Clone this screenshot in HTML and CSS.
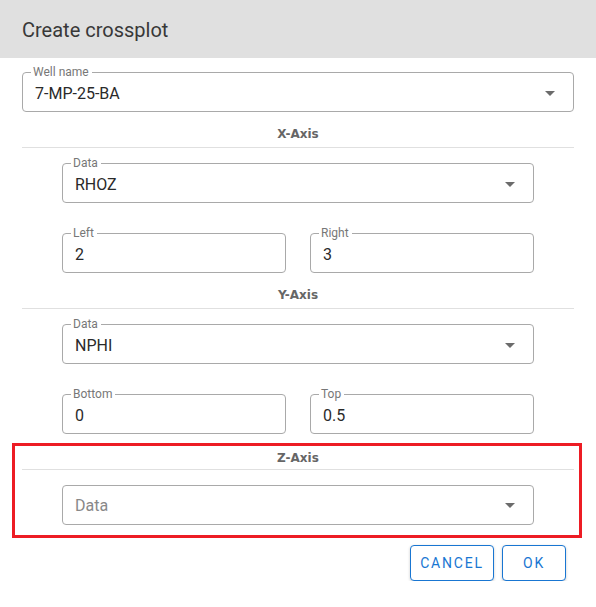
FILE: index.html
```html
<!DOCTYPE html>
<html>
<head>
<meta charset="utf-8">
<link rel="stylesheet" href="styles.css">
</head>
<body>
<div class="dialog">
  <div class="dialog-title">Create crossplot</div>
  <div class="dialog-content">
    <div class="field select">
      <span class="label">Well name</span>
      <span class="value">7-MP-25-BA</span>
      <svg class="arrow" viewBox="0 0 24 24" width="24" height="24"><path d="M7 10l5 5 5-5z"/></svg>
    </div>

    <div class="section-title">X-Axis</div>
    <div class="group">
      <div class="field select">
        <span class="label">Data</span>
        <span class="value">RHOZ</span>
        <svg class="arrow" viewBox="0 0 24 24" width="24" height="24"><path d="M7 10l5 5 5-5z"/></svg>
      </div>
      <div class="pair">
        <div class="field"><span class="label">Left</span><span class="value">2</span></div>
        <div class="field"><span class="label">Right</span><span class="value">3</span></div>
      </div>
    </div>

    <div class="section-title">Y-Axis</div>
    <div class="group">
      <div class="field select">
        <span class="label">Data</span>
        <span class="value">NPHI</span>
        <svg class="arrow" viewBox="0 0 24 24" width="24" height="24"><path d="M7 10l5 5 5-5z"/></svg>
      </div>
      <div class="pair">
        <div class="field"><span class="label">Bottom</span><span class="value">0</span></div>
        <div class="field"><span class="label">Top</span><span class="value">0.5</span></div>
      </div>
    </div>

    <div class="highlight">
      <div class="section-title z">Z-Axis</div>
      <div class="group">
        <div class="field select empty">
          <span class="value placeholder">Data</span>
          <svg class="arrow" viewBox="0 0 24 24" width="24" height="24"><path d="M7 10l5 5 5-5z"/></svg>
        </div>
      </div>
    </div>
  </div>
  <div class="dialog-actions">
    <button class="btn cancel">CANCEL</button>
    <button class="btn ok">OK</button>
  </div>
</div>
</body>
</html>
```
FILE: styles.css
```css
* { box-sizing: border-box; }
html, body { margin: 0; padding: 0; background: #fff; }
body { font-family: Roboto, "Liberation Sans", Arial, sans-serif; color: #222; }

.dialog { width: 596px; }

.dialog-title {
  height: 58px;
  background: #e0e0e0;
  padding: 18px 22px 0;
  font-size: 20px;
  line-height: 24px;
  color: #383838;
}

.dialog-content { padding: 14px 22px 0; }

.field {
  position: relative;
  height: 40px;
  border: 1px solid #a9a9a9;
  border-radius: 4px;
  padding: 10px 12px 8px;
  display: flex;
  align-items: center;
}

.field .label {
  position: absolute;
  top: -8px;
  left: 8px;
  padding: 0 3px 0 2px;
  background: #fff;
  font-size: 12px;
  line-height: 14px;
  color: #777;
}

.field .value {
  flex: 1;
  font-size: 16px;
  line-height: 19px;
  color: #2a2a2a;
}

.field.empty { padding-top: 8px; padding-bottom: 8px; }
.field .placeholder { color: #888; }

.field .arrow {
  flex: none;
  fill: #6b6b6b;
  margin-right: -1px;
}

.section-title {
  padding: 14px 0 5px;
  font-family: "DejaVu Sans", Verdana, sans-serif;
  font-weight: bold;
  font-size: 12px;
  line-height: 16px;
  color: #666;
  text-align: center;
  border-bottom: 1px solid #e0e0e0;
}

.group { padding: 15px 40px 0; }

.pair {
  display: grid;
  grid-template-columns: 1fr 1fr;
  column-gap: 24px;
  margin-top: 30px;
}

.highlight {
  margin: 9px -8px 0 -10px;
  padding: 0 5px 10px 7px;
  border: 3px solid #ed1c24;
}

.section-title.z { padding-top: 4px; padding-bottom: 3px; }
.highlight .group { padding-top: 15px; }

.dialog-actions {
  display: flex;
  justify-content: flex-end;
  gap: 8px;
  padding: 7px 30px 0 0;
}

.btn {
  height: 36px;
  border: 1px solid #1976d2;
  border-radius: 4px;
  background: #fff;
  color: #1976d2;
  font-family: Roboto, "Liberation Sans", sans-serif;
  font-size: 14px;
  letter-spacing: 1.8px;
  box-shadow: 0 1px 3px rgba(0,0,0,0.2);
  padding: 0;
}
.btn.cancel { width: 84px; }
.btn.ok { width: 64px; }
```
